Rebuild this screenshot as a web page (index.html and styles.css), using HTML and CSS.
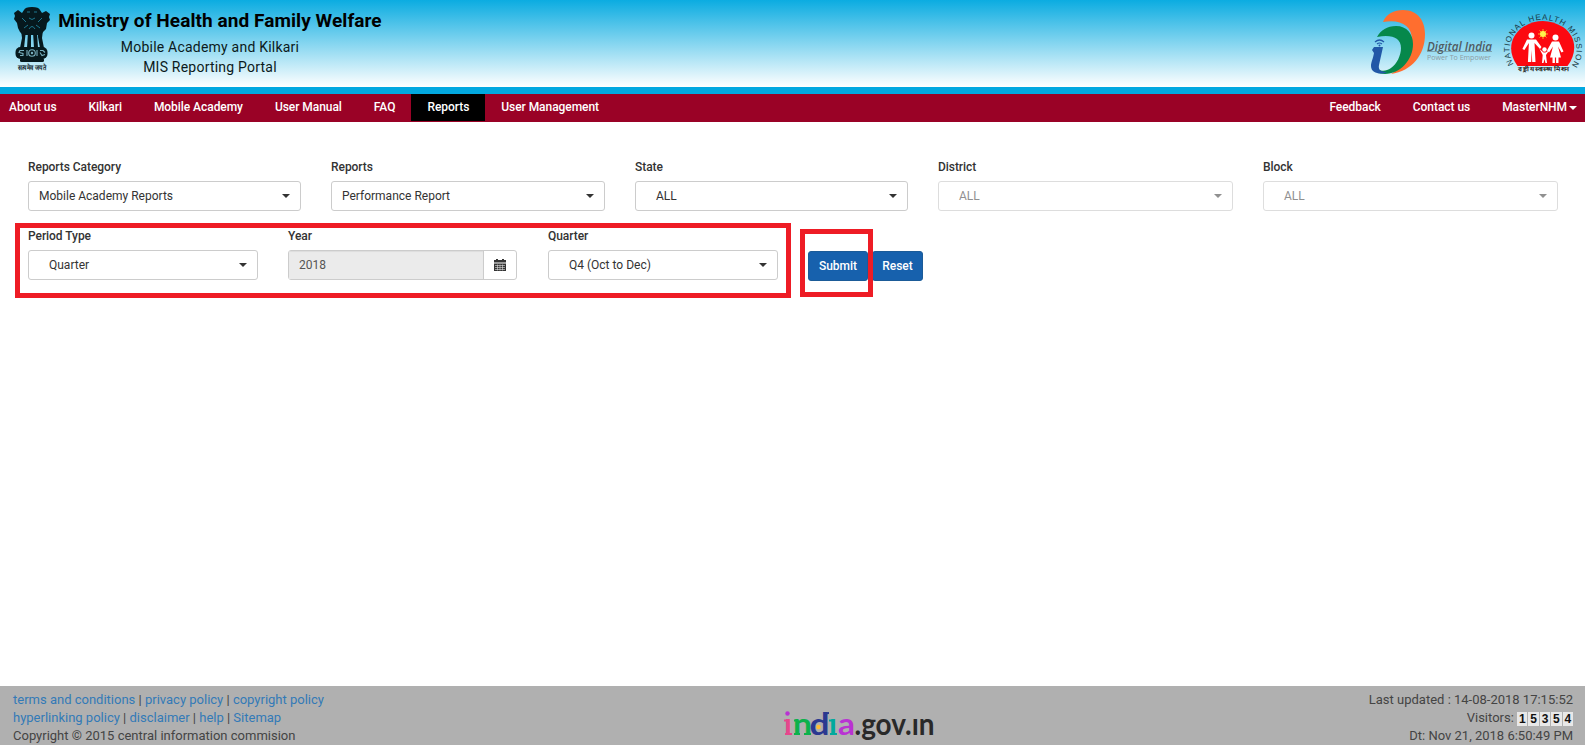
FILE: index.html
```html
<!DOCTYPE html>
<html lang="en">
<head>
<meta charset="utf-8">
<title>MIS Reporting Portal</title>
<link rel="stylesheet" href="styles.css">
</head>
<body>
<div class="page">
<header class="header">
  <div class="brand">
    <svg class="emblem" width="60" height="80" viewBox="0 0 60 80">
      <g fill="#06191e">
        <path d="M24 10q1-3 8-3t8 3l2 3 4-2 4 3-1 3 1 3-3 3-1 6-3 3-2 3H23l-3-3-2-4-1-5-3-4 1-3-1-3 4-3 4 3z"/>
        <path d="M21 30h5l-1 9-1 9h-4l2-10zM28 32h3v16h-4zM33 32h4l1 16h-4zM38 30h5l-1 8 2 10h-4l-2-11z"/>
        <rect x="15.500" y="47" width="32" height="12" rx="5"/>
        <rect x="20" y="58" width="24" height="4" rx="1.500"/>
      </g>
      <path d="M27 12h3m4 0h3M29 18q3 3 6 0M22 18l4 4m16-4-4 4M24 28l4-3m12 3-4-3M29 29q3-5 6 0" fill="none" stroke="#1d7890" stroke-width="1"/>
      <g fill="none" stroke="#78b0bf" stroke-width="1.100"><circle cx="32" cy="53" r="3.300"/><path d="M24 50.500h-4l-1 2 4 1v2h-3m20-5h3l2 2m-5 0l2 3 3-1M27 50v6m10-6v6"/></g><circle cx="32" cy="53" r="1.200" fill="#78b0bf"/>
      <text x="17.500" y="69.500" textLength="28.500" lengthAdjust="spacingAndGlyphs" class="motto">सत्यमेव जयते</text>
    </svg>
    <div class="titles">
      <h1>Ministry of Health and Family Welfare</h1>
      <p class="sub-one">Mobile Academy and Kilkari</p>
      <p class="sub-two">MIS Reporting Portal</p>
    </div>
  </div>
  <svg class="logos" width="235" height="87" viewBox="0 0 235 87">
    <path d="M33 22C36 14 44 10 53 10c15 0 22 11 22 24 0 21-13 37-34 40 13-8 21-20 21-34 0-15-12-21-29-18z" fill="#ff6e2f"/>
    <path d="M27 37c4-7 10-11 19-11 11 0 17 8 17 18 0 16-13 30-28 30-7 0-11-3-11-9v-1c3 7 10 9 17 4 6-4 10-13 10-20 0-10-9-14-24-11z" fill="#06884b"/>
    <path d="M24 47h9l-4 18c-1 5 2 7 8 7-5 3-16 2-16-6 0-4 2-7 3-13l-2-3z" fill="#2158a7"/>
    <path d="M25 42q4.500-4 9 0m-7 2q2.500-2 5 0" fill="none" stroke="#2158a7" stroke-width="1.200"/><circle cx="29.500" cy="45.500" r="1" fill="#2158a7"/>
    <text x="77" y="50.500" class="digital" textLength="65" lengthAdjust="spacingAndGlyphs">Digital India</text>
    <path d="M77 51.500h65" stroke="#667b82" stroke-width=".6"/>
    <text x="77" y="59.500" class="empower" textLength="64" lengthAdjust="spacingAndGlyphs">Power To Empower</text>
    <path d="M167.500 66C157 52 160 36 173 27q20-12 40 0c13 9 15 25 4.500 39z" fill="#fc0910"/>
    <path id="mission-arc" d="M163.500 64A33.500 30 0 1 1 222.500 64" fill="none"/>
    <text class="mission"><textPath href="#mission-arc" textLength="131" lengthAdjust="spacing">NATIONAL HEALTH MISSION</textPath></text>
    <g fill="#fff">
      <circle cx="181.500" cy="35.500" r="3"/><path d="M177 39.500h9l5.500 7.500-1.500 2-5.500-6 1 19h-3.300l-.5-12-.5 12h-3.300l1-19-4.500 7-2-1z"/>
      <circle cx="205.500" cy="37.500" r="3"/><path d="M202 41.500h7l4.500 10-2 1-3.500-6 3 11h-2.500v5.500h-2.400v-5.500h-1.200v5.500h-2.400v-5.500h-2.500l3-11-4 6-2-2z"/>
      <circle cx="194.500" cy="49.500" r="2.200"/><path d="M189.500 49l4 3.500h2l4-2.500-3.500 5 1 8h-1.500l-1-4-1 4h-1.500l.7-8z"/>
    </g>
    <path d="M193 29v10m-5-5h10m-8.500-3.500 7 7m0-7-7 7" stroke="#ffae20"/><circle cx="193" cy="34" r="3" fill="#fff34b"/>
    <text x="168" y="71" class="hindi" textLength="51" lengthAdjust="spacingAndGlyphs">राष्ट्रीय स्वास्थ्य मिशन</text>
  </svg>
</header>
<nav class="nav">
  <a>About us</a><a>Kilkari</a><a>Mobile Academy</a><a>User Manual</a><a>FAQ</a><a class="active">Reports</a><a>User Management</a>
  <div class="nav-right"><a>Feedback</a><a>Contact us</a><a class="user">MasterNHM<i class="caret"></i></a></div>
</nav>
<main class="main">
  <div class="row filters">
    <div class="field"><label>Reports Category</label><div class="select">Mobile Academy Reports<i class="caret"></i></div></div>
    <div class="field"><label>Reports</label><div class="select">Performance Report<i class="caret"></i></div></div>
    <div class="field"><label>State</label><div class="select indent">ALL<i class="caret"></i></div></div>
    <div class="field"><label>District</label><div class="select indent disabled">ALL<i class="caret"></i></div></div>
    <div class="field"><label>Block</label><div class="select indent disabled">ALL<i class="caret"></i></div></div>
  </div>
  <div class="row periods">
    <div class="field"><label>Period Type</label><div class="select indent">Quarter<i class="caret"></i></div></div>
    <div class="field"><label>Year</label><div class="year"><span>2018</span><b>
      <svg width="12" height="13" viewBox="0 0 12 13"><path d="M0 1h2V0h2v1h4V0h2v1h2v2.500H0zM0 4.500h12V12H0z" fill="#333"/><path d="M1 6.500h10M1 8.500h10M1 10.500h10M3.500 5.500v6M6 5.500v6M8.500 5.500v6" stroke="#ddd" stroke-width=".6"/></svg></b></div></div>
    <div class="field"><label>Quarter</label><div class="select indent">Q4 (Oct to Dec)<i class="caret"></i></div></div>
    <div class="buttons"><button class="submit">Submit</button><button class="reset">Reset</button></div>
  </div>
  <div class="mark mark-period"></div>
  <div class="mark mark-submit"></div>
</main>
<footer class="footer">
  <div class="links"><p class="f1"><a>terms and conditions</a> | <a>privacy policy</a> | <a>copyright policy</a></p><p class="f2"><a>hyperlinking policy</a> | <a>disclaimer</a> | <a>help</a> | <a>Sitemap</a></p><p class="f3">Copyright © 2015 central information commision</p></div>
  <svg class="gov" width="156" height="54" viewBox="0 -9 156 54">
    <g class="gov-text"><text x="0" y="35" fill="#e6478c">ı</text><text x="9" y="35" fill="#0cb14b" textLength="19" lengthAdjust="spacingAndGlyphs">n</text><text x="25.500" y="35" fill="#2b3990" textLength="20" lengthAdjust="spacingAndGlyphs">d</text><text x="45" y="35" fill="#00a99d">ı</text><text x="54" y="35" fill="#b932d3" textLength="17" lengthAdjust="spacingAndGlyphs">a</text><text x="70.500" y="35" fill="#292929" textLength="80" lengthAdjust="spacingAndGlyphs">.gov.ın</text></g>
    <path d="M0 20.500h4M1 34h7" stroke="#e6478c" stroke-width="2"/><path d="M10 20.500h4M10 34h6M20 34h7" stroke="#0cb14b" stroke-width="2"/><path d="M45 20.500h4M46 34h7" stroke="#00a99d" stroke-width="2"/><path d="M41 15q0-2 4-2" fill="none" stroke="#2b3990" stroke-width="2"/>
    <circle cx="3.500" cy="13.500" r="2.200" fill="#b932d3"/><circle cx="34.500" cy="27" r="2.300" fill="#fdbd35"/>
  </svg>
  <div class="stats"><p class="s1">Last updated : 14-08-2018 17:15:52</p><p class="s2">Visitors: <span class="count"><i>1</i><i>5</i><i>3</i><i>5</i><i>4</i></span></p><p class="s3">Dt: Nov 21, 2018 6:50:49 PM</p></div>
</footer>
</div>
</body>
</html>
```
FILE: styles.css
```css
* { box-sizing: border-box; }
body { margin: 0; font-family: Roboto, sans-serif; font-size: 12px; color: #333; background: #fff; }
p, h1 { margin: 0; }
.page { width: 1585px; height: 745px; display: flex; flex-direction: column; overflow: hidden; }
.header { height: 94px; border-bottom: 7px solid #02a8e0; background: linear-gradient(#0bace1, #fff); display: flex; justify-content: space-between; flex: none; }
.brand { display: flex; }
.emblem { display: block; }
.motto { font-size: 7px; font-weight: 700; fill: #10262c; }
.titles { width: 324px; margin-left: -2px; padding-top: 8px; text-align: center; color: #000; white-space: nowrap; }
.titles h1 { font-size: 19px; line-height: 25px; font-weight: 700; letter-spacing: .07px; }
.titles p { font-size: 14px; line-height: 20px; letter-spacing: .22px; padding-right: 20px; color: #0b1a20; }
.titles .sub-one { padding-top: 4px; }
.logos { display: block; }
.digital { font: italic 600 12px "Open Sans", sans-serif; fill: #4f5b62; }
.empower { font: 7px "Open Sans", sans-serif; fill: #8b9ca4; }
.mission { font: 8px "Liberation Sans", sans-serif; fill: #183944; }
.hindi { font-size: 6px; font-weight: 700; fill: #222; }
.nav { height: 28px; flex: none; background: #9a0226; display: flex; align-items: flex-start; padding-right: 8px; }
.nav a { height: 27px; line-height: 26px; padding: 0 16px; color: #fff; font-weight: 500; white-space: nowrap; letter-spacing: -.055px; }
.nav > a:first-child { padding-left: 9px; }
.nav .active { background: #000; }
.nav-right { display: flex; margin-left: auto; }
.nav-right .user { padding-right: 0; }
.caret { display: inline-block; border: 4px solid transparent; border-top-color: currentColor; border-bottom: 0; }
.user .caret { margin-left: 2px; vertical-align: 1px; }
.main { flex: 1; position: relative; padding: 38px 27px 0 28px; }
.row { display: grid; column-gap: 30px; }
.filters { grid-template-columns: 273px 274px 273px 295px 295px; height: 69px; }
.periods { grid-template-columns: 230px 230px 230px 120px; }
.field label { display: block; height: 21px; line-height: 15px; font-weight: 500; letter-spacing: -.05px; }
.select, .year { height: 30px; border: 1px solid #ccc; border-radius: 3px; display: flex; align-items: center; white-space: nowrap; }
.select { padding: 0 10px; }
.select.indent { padding-left: 20px; }
.select .caret { margin-left: auto; }
.disabled { opacity: .65; color: #555; }
.year { width: 229px; }
.year span { align-self: stretch; flex: 1; background: #ebebeb; color: #555; padding-left: 10px; line-height: 28px; border-right: 1px solid #ccc; box-shadow: inset 0 1px 1px #ddd; }
.year b { width: 32px; display: flex; justify-content: center; padding-right: 1px; }
.buttons { padding-top: 22px; display: flex; gap: 4px; }
.buttons button { height: 30px; border: 1px solid #1b5b98; border-radius: 3px; background: #1761ad; color: #fff; font: 500 12px Roboto, sans-serif; padding: 0; }
.submit { width: 60px; }
.reset { width: 51px; }
.mark { position: absolute; border: 5px solid #ee1c25; }
.mark-period { left: 15px; top: 101px; width: 776px; height: 75px; }
.mark-submit { left: 800px; top: 107px; width: 73px; height: 68px; }
.footer { height: 59px; flex: none; background: #b0b0b0; padding: 5px 12px 0 13px; display: grid; grid-template-columns: 771px 156px 1fr; font-size: 13px; line-height: 18px; color: #444; white-space: nowrap; }
.footer a { color: #337ab7; }
.gov { display: block; overflow: visible; }
.gov-text { font: 700 31px Lato, sans-serif; }
.stats { text-align: right; }
.stats p { height: 18px; }
.count { display: inline-flex; gap: 1px; vertical-align: top; margin-top: 3px; }
.count i { width: 10.400px; height: 14px; background: #e8e8e8; color: #111; font: 700 12px/15px "Liberation Sans", sans-serif; text-align: center; }
```
